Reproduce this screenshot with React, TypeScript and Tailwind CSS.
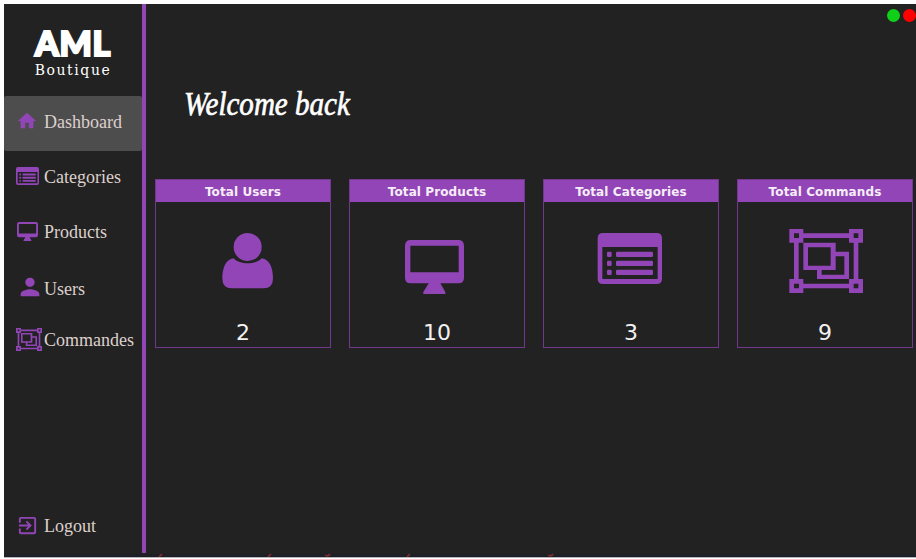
import React from "react";
import { MdExitToApp, MdHome, MdPerson } from "react-icons/md";

const MonitorShape = () => (
  <path
    fillRule="evenodd"
    d="M212 210H355Q372 210 372 227V323Q372 340 355 340H301L316 366V372H250V366L266 340H212Q195 340 195 323V227Q195 210 212 210ZM211 227V307H356V227Z"
  />
);

const ListShape = () => (
  <>
    <path
      fillRule="evenodd"
      d="M204 189H365Q381 189 381 205V326Q381 342 365 342H204Q188 342 188 326V205Q188 189 204 189ZM202 231V327H368V231Z"
    />
    {[245, 272, 299].map((y) => (
      <g key={y}>
        <rect x="216" y={y} width="14" height="16" rx="4" />
        <rect x="243" y={y} width="111" height="16" rx="4" />
      </g>
    ))}
  </>
);

const GroupShape = () => (
  <path
    fillRule="evenodd"
    d="M178 177H220V190H357V177H399V218H385V327H399V369H357V355H220V369H178V327H192V218H178ZM192 190V204H207V190ZM371 190V204H385V190ZM192 341V355H207V341ZM371 341V355H385V341ZM220 204V218H206V327H220V341H357V327H371V218H357V204ZM220 218H317V245H357V327H261V300H220ZM234 232V287H302V232ZM317 259V300H275V314H343V259Z"
  />
);

const UserShape = () => (
  <>
    <circle cx="293" cy="231" r="42" />
    <path d="M251 265C268 285 318 285 335 265C360 268 369 296 369 325Q369 355 341 355H245Q217 355 217 325C217 296 226 268 251 265Z" />
  </>
);

const nav = [
  { label: "Dashboard", row: "h-[55px] bg-[#4d4d4d] rounded-xs", icon: <MdHome className="mb-[5px] size-[22px]" /> },
  { label: "Categories", row: "h-[54px]", icon: <svg viewBox="188 189 193 153" preserveAspectRatio="none" fill="currentColor" className="mb-[4px] h-[18px] w-[23px]"><ListShape /></svg> },
  { label: "Products", row: "h-[56px]", icon: <svg viewBox="195 210 177 162" preserveAspectRatio="none" fill="currentColor" className="mb-[3px] ml-px h-[19px] w-[21px]"><MonitorShape /></svg> },
  { label: "Users", row: "h-[58px]", icon: <MdPerson className="mb-[6px] size-[28px]" /> },
  { label: "Commandes", row: "h-[44px]", icon: <svg viewBox="178 177 221 192" preserveAspectRatio="none" fill="currentColor" className="mb-[4px] h-[23px] w-[26px]"><GroupShape /></svg> },
];

const cards = [
  { title: "Total Users", value: 2, viewBox: "18 96 522 300", shape: <UserShape /> },
  { title: "Total Products", value: 10, viewBox: "30 96 522 300", shape: <MonitorShape /> },
  { title: "Total Categories", value: 3, viewBox: "27 96 522 300", shape: <ListShape /> },
  { title: "Total Commands", value: 9, viewBox: "24 96 522 300", shape: <GroupShape /> },
];

export default function App() {
  return (
    <div className="h-[559px] w-[916px] overflow-hidden bg-white pt-1 pl-1">
      <div className="relative flex h-[553px] bg-[#222222]">
        <aside className="flex h-[550px] w-[142px] shrink-0 flex-col border-r-[4px] border-[#9145b6]">
          <div className="flex h-[92px] flex-col items-center pt-[21px] text-white">
            <div className="h-[36px] font-['Lato',sans-serif] text-[34px] leading-[36px] font-black tracking-[0.6px] [-webkit-text-stroke:2.2px_white] [stroke-linejoin:round]">AML</div>
            <div className="font-['DejaVu_Serif',serif] text-[15.5px] leading-[19px] tracking-[1.6px] [font-stretch:condensed]">Boutique</div>
          </div>
          <nav>
            {nav.map((n) => (
              <div key={n.label} className={`flex items-center pl-3 ${n.row}`}>
                <span className="flex w-[28px] shrink-0 text-[#9145b6]">{n.icon}</span>
                <span className="pb-[3px] font-['Liberation_Serif',serif] text-[18px] leading-[22px] text-[#ddd0cd]">{n.label}</span>
              </div>
            ))}
          </nav>
          <div className="mt-auto mb-[8px] flex h-[40px] items-center pl-3">
            <span className="flex w-[28px] shrink-0 text-[#9145b6]"><MdExitToApp className="mb-[2px] size-[23px]" /></span>
            <span className="font-['Liberation_Serif',serif] text-[18px] leading-[22px] text-[#ddd0cd]">Logout</span>
          </div>
        </aside>
        <main className="flex min-w-0 flex-1 flex-col">
          <div className="flex h-[22px] shrink-0 items-center justify-end gap-[3px]">
            <span className="size-[13px] rounded-full bg-[#10cf18]" />
            <span className="size-[13px] rounded-full bg-[#ff0000]" />
          </div>
          <h1 className="mt-[57px] ml-[38px] h-[40px] w-max origin-left scale-x-[0.88] font-['Liberation_Serif',serif] text-[33px] leading-[42px] font-medium text-white italic [-webkit-text-stroke:0.7px_white]">Welcome back</h1>
          <section className="mt-[56px] ml-[9px] grid w-max grid-cols-[repeat(4,176px)] gap-[18px]">
            {cards.map((c) => (
              <div key={c.title} className="h-[169px] border border-[#71388d]">
                <div className="h-[22px] bg-[#9145b6] text-center font-['DejaVu_Sans',sans-serif] text-[12px] leading-[24px] font-bold tracking-[0.1px] text-[#f6edf8]">{c.title}</div>
                <svg viewBox={c.viewBox} className="h-[100px] w-[174px] fill-[#9145b6]">{c.shape}</svg>
                <div className="text-center font-['DejaVu_Sans',sans-serif] text-[22px] leading-[62px] text-[#f2f2f2]">{c.value}</div>
              </div>
            ))}
          </section>
        </main>
        <div className="absolute inset-x-0 bottom-0 h-[4px] overflow-hidden bg-linear-to-b from-[#222222] to-[#1b1d28]">
          <svg viewBox="0 0 912 4" className="h-[4px] w-[912px] fill-none stroke-[#8a2b2e] stroke-[1.5]">
            <path d="M155 4L158 1M264 4L267 1M321 2Q324 4 326 1M403 4L406 1M544 2Q547 4 549 1" />
          </svg>
        </div>
      </div>
      <div className="h-px bg-[#b5b6ba]" />
    </div>
  );
}
